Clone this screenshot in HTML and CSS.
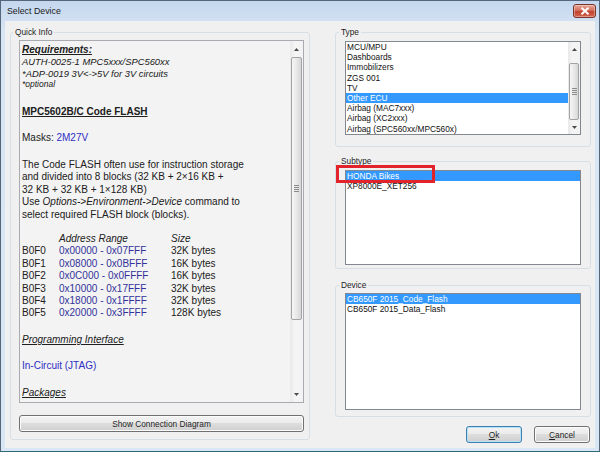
FILE: index.html
```html
<!DOCTYPE html>
<html>
<head>
<meta charset="utf-8">
<title>Select Device</title>
<link rel="stylesheet" href="styles.css">
</head>
<body>
<div class="window">
  <div class="titlebar">
    <span class="title">Select Device</span>
    <div class="close"><svg width="10" height="8" viewBox="0 0 10 8"><path d="M1.5 0.8 L8.5 7.2 M8.5 0.8 L1.5 7.2" stroke="#fff" stroke-width="2"/></svg></div>
  </div>
  <div class="client">
    <fieldset class="group quick">
      <legend>Quick Info</legend>
      <div class="infobox">
        <div class="info">
          <div class="req-h">Requirements:</div>
          <div class="req">AUTH-0025-1 MPC5xxx/SPC560xx</div>
          <div class="req">*ADP-0019 3V&lt;-&gt;5V for 3V circuits</div>
          <div class="req small">*optional</div>
          <div class="head">MPC5602B/C Code FLASH</div>
          <p class="masks">Masks: <span class="blue">2M27V</span></p>
          <p class="para">The Code FLASH often use for instruction storage<br>and divided into 8 blocks (32 KB + 2×16 KB +<br>32 KB + 32 KB + 1×128 KB)<br>Use <i>Options-&gt;Environment-&gt;Device</i> command to<br>select required FLASH block (blocks).</p>
          <div class="table">
            <span></span><i>Address Range</i><i>Size</i>
            <span>B0F0</span><span class="addr">0x00000 - 0x07FFF</span><span>32K bytes</span>
            <span>B0F1</span><span class="addr">0x08000 - 0x0BFFF</span><span>16K bytes</span>
            <span>B0F2</span><span class="addr">0x0C000 - 0x0FFFF</span><span>16K bytes</span>
            <span>B0F3</span><span class="addr">0x10000 - 0x17FFF</span><span>32K bytes</span>
            <span>B0F4</span><span class="addr">0x18000 - 0x1FFFF</span><span>32K bytes</span>
            <span>B0F5</span><span class="addr">0x20000 - 0x3FFFF</span><span>128K bytes</span>
          </div>
          <div class="sub">Programming Interface</div>
          <p class="iface blue">In-Circuit (JTAG)</p>
          <div class="sub">Packages</div>
        </div>
        <div class="vscroll big">
          <div class="arrow"><svg width="5" height="3" viewBox="0 0 5 3"><path d="M0 3 L2.5 0 L5 3Z" fill="#4a4a4a"/></svg></div>
          <div class="track"><div class="thumb"><svg width="5" height="7" viewBox="0 0 5 7"><path d="M0 0.5H5M0 2.5H5M0 4.5H5M0 6.5H5" stroke="#8a8a8a" stroke-width="1"/></svg></div></div>
          <div class="arrow"><svg width="5" height="3" viewBox="0 0 5 3"><path d="M0 0 L2.5 3 L5 0Z" fill="#4a4a4a"/></svg></div>
        </div>
      </div>
      <button class="btn wide">Show Connection Diagram</button>
    </fieldset>

    <div class="right">
      <fieldset class="group type">
        <legend>Type</legend>
        <div class="listbox typelist">
          <div class="items">
            <div class="item">MCU/MPU</div>
            <div class="item">Dashboards</div>
            <div class="item">Immobilizers</div>
            <div class="item">ZGS 001</div>
            <div class="item">TV</div>
            <div class="item sel">Other ECU</div>
            <div class="item">Airbag (MAC7xxx)</div>
            <div class="item">Airbag (XC2xxx)</div>
            <div class="item">Airbag (SPC560xx/MPC560x)</div>
          </div>
          <div class="vscroll small">
            <div class="arrow"><svg width="5" height="3" viewBox="0 0 5 3"><path d="M0 3 L2.5 0 L5 3Z" fill="#4a4a4a"/></svg></div>
            <div class="track"><div class="thumb"><svg width="5" height="7" viewBox="0 0 5 7"><path d="M0 0.5H5M0 2.5H5M0 4.5H5M0 6.5H5" stroke="#8a8a8a" stroke-width="1"/></svg></div></div>
            <div class="arrow"><svg width="5" height="3" viewBox="0 0 5 3"><path d="M0 0 L2.5 3 L5 0Z" fill="#4a4a4a"/></svg></div>
          </div>
        </div>
      </fieldset>

      <fieldset class="group subtype">
        <legend>Subtype</legend>
        <div class="listbox sublist">
          <div class="items">
            <div class="item sel">HONDA Bikes</div>
            <div class="item">XP8000E_XET256</div>
          </div>
          <div class="mark"></div>
        </div>
      </fieldset>

      <fieldset class="group device">
        <legend>Device</legend>
        <div class="listbox devlist">
          <div class="items">
            <div class="item sel">CB650F 2015_Code_Flash</div>
            <div class="item">CB650F 2015_Data_Flash</div>
          </div>
        </div>
      </fieldset>

      <div class="buttons">
        <button class="btn default"><u>O</u>k</button>
        <button class="btn"><u>C</u>ancel</button>
      </div>
    </div>
  </div>
</div>
</body>
</html>
```

FILE: styles.css
```css
* { box-sizing: border-box; }

body {
  margin: 0;
  background: #ffffff;
}

.window {
  width: 600px;
  height: 452px;
  border: 1px solid #56667a;
  border-bottom-color: #2d6878;
  background: linear-gradient(#c4d7ee, #d8e5f4 30px, #d9e6f4);
  padding: 0 4px 3px 4px;
  display: flex;
  flex-direction: column;
  font-family: "Liberation Sans", Arial, sans-serif;
  color: #1e1e1e;
}

.titlebar {
  height: 20px;
  display: flex;
  align-items: flex-start;
  justify-content: space-between;
}

.title {
  margin: 5px 0 0 2px;
  font-size: 8.8px;
  line-height: 10px;
  color: #1a1a1a;
}

.close {
  width: 23px;
  height: 14px;
  margin: 3px -1px 0 0;
  border: 1px solid #7b3328;
  border-radius: 3px;
  background: linear-gradient(#e9a797, #d46f5d 45%, #c2432f 55%, #d1664f);
  display: flex;
  align-items: center;
  justify-content: center;
  box-shadow: inset 0 0 0 1px rgba(255,255,255,0.35);
}

.client {
  flex: 1;
  background: #f0f0f0;
  display: flex;
  padding: 6px 4px 0 5px;
}

fieldset.group {
  margin: 0;
  padding: 3px 5px 7px 8px;
  border: 1px solid #d5dfe5;
  border-radius: 3px;
  min-width: 0;
}

legend {
  font-size: 8.3px;
  line-height: 10px;
  padding: 0 2px;
  margin-left: -6px;
  color: #1e1e1e;
}

.quick {
  width: 300px;
  align-self: flex-start;
}

.infobox {
  display: flex;
  height: 363px;
  border: 1px solid #a9abb0;
  background: #f3f3f3;
}

.info {
  flex: 1;
  overflow: hidden;
  padding: 3px 0 0 2px;
  font-size: 10px;
  line-height: 12.4px;
  color: #202020;
  white-space: nowrap;
}

.info p { margin: 0; }

.req-h {
  font-weight: bold;
  font-style: italic;
  text-decoration: underline;
  line-height: 12px;
}

.req {
  font-style: italic;
  font-size: 9.4px;
  line-height: 11.5px;
}

.req.small { font-size: 8.5px; }

.head {
  margin-top: 15px;
  font-weight: bold;
  text-decoration: underline;
  line-height: 12px;
}

.info .masks { margin-top: 14px; }
.info .para { margin-top: 15px; }

.blue { color: #2e2ec4; }
.addr { color: #32329a; }

.table {
  margin-top: 12px;
  display: grid;
  grid-template-columns: 37px 112px auto;
}

.sub {
  margin-top: 14px;
  font-style: italic;
  text-decoration: underline;
}

.info .iface { margin-top: 14px; }

.vscroll {
  display: flex;
  flex-direction: column;
  background: linear-gradient(to right, #e9e9e9, #f5f5f5 40%, #f2f2f2);
}

.vscroll.big { width: 13px; }
.vscroll.small { width: 12px; }

.arrow {
  height: 16px;
  display: flex;
  align-items: center;
  justify-content: center;
}

.vscroll.small .arrow { height: 14px; }

.track {
  flex: 1;
  display: flex;
  flex-direction: column;
}

.thumb {
  margin: 0 1px;
  border: 1px solid #a3a3a3;
  border-radius: 2px;
  background: linear-gradient(to right, #f6f6f6, #e7e7e7 55%, #d6d6d6);
  display: flex;
  align-items: center;
  justify-content: center;
}

.vscroll.big .thumb { height: 263px; }
.vscroll.small .thumb { height: 57px; margin-top: 7px; }

.btn {
  font-family: "Liberation Sans", Arial, sans-serif;
  font-size: 8.3px;
  color: #1e1e1e;
  height: 17px;
  padding: 0;
  border: 1px solid #707070;
  border-radius: 3px;
  background: linear-gradient(#f3f3f3, #ebebeb 45%, #dddddd 50%, #cfcfcf);
  box-shadow: inset 0 0 0 1px #fcfcfc;
}

.btn.wide {
  display: block;
  width: 100%;
  margin-top: 12px;
}

.right {
  width: 256px;
  margin-left: 25px;
  display: flex;
  flex-direction: column;
}

.right fieldset.group {
  padding: 4px 9px 11px 9px;
}

.listbox {
  border: 1px solid #828790;
  background: #ffffff;
  display: flex;
  font-size: 8.3px;
  line-height: 10.2px;
  color: #111;
}

.items {
  flex: 1;
  white-space: nowrap;
}

.item { padding-left: 1px; }

.item.sel {
  background: #3399ff;
  color: #ffffff;
}

.typelist { height: 94px; }

.right fieldset.subtype {
  margin-top: 9px;
  padding-bottom: 3px;
}

.sublist {
  height: 95px;
  position: relative;
}

.mark {
  position: absolute;
  left: -10px;
  top: -6px;
  width: 99px;
  height: 18px;
  border: 3px solid #e2232b;
}

.right fieldset.device {
  margin-top: 11px;
  padding-top: 3px;
  padding-bottom: 6px;
}

.devlist { height: 117px; }

.buttons {
  margin-top: 9px;
  display: flex;
  justify-content: flex-end;
  gap: 12px;
  padding-right: 1px;
}

.buttons .btn { width: 56px; }

.btn.default {
  border-color: #3c7fb1;
  box-shadow: inset 0 0 0 1px #b6e1f9;
}
```
